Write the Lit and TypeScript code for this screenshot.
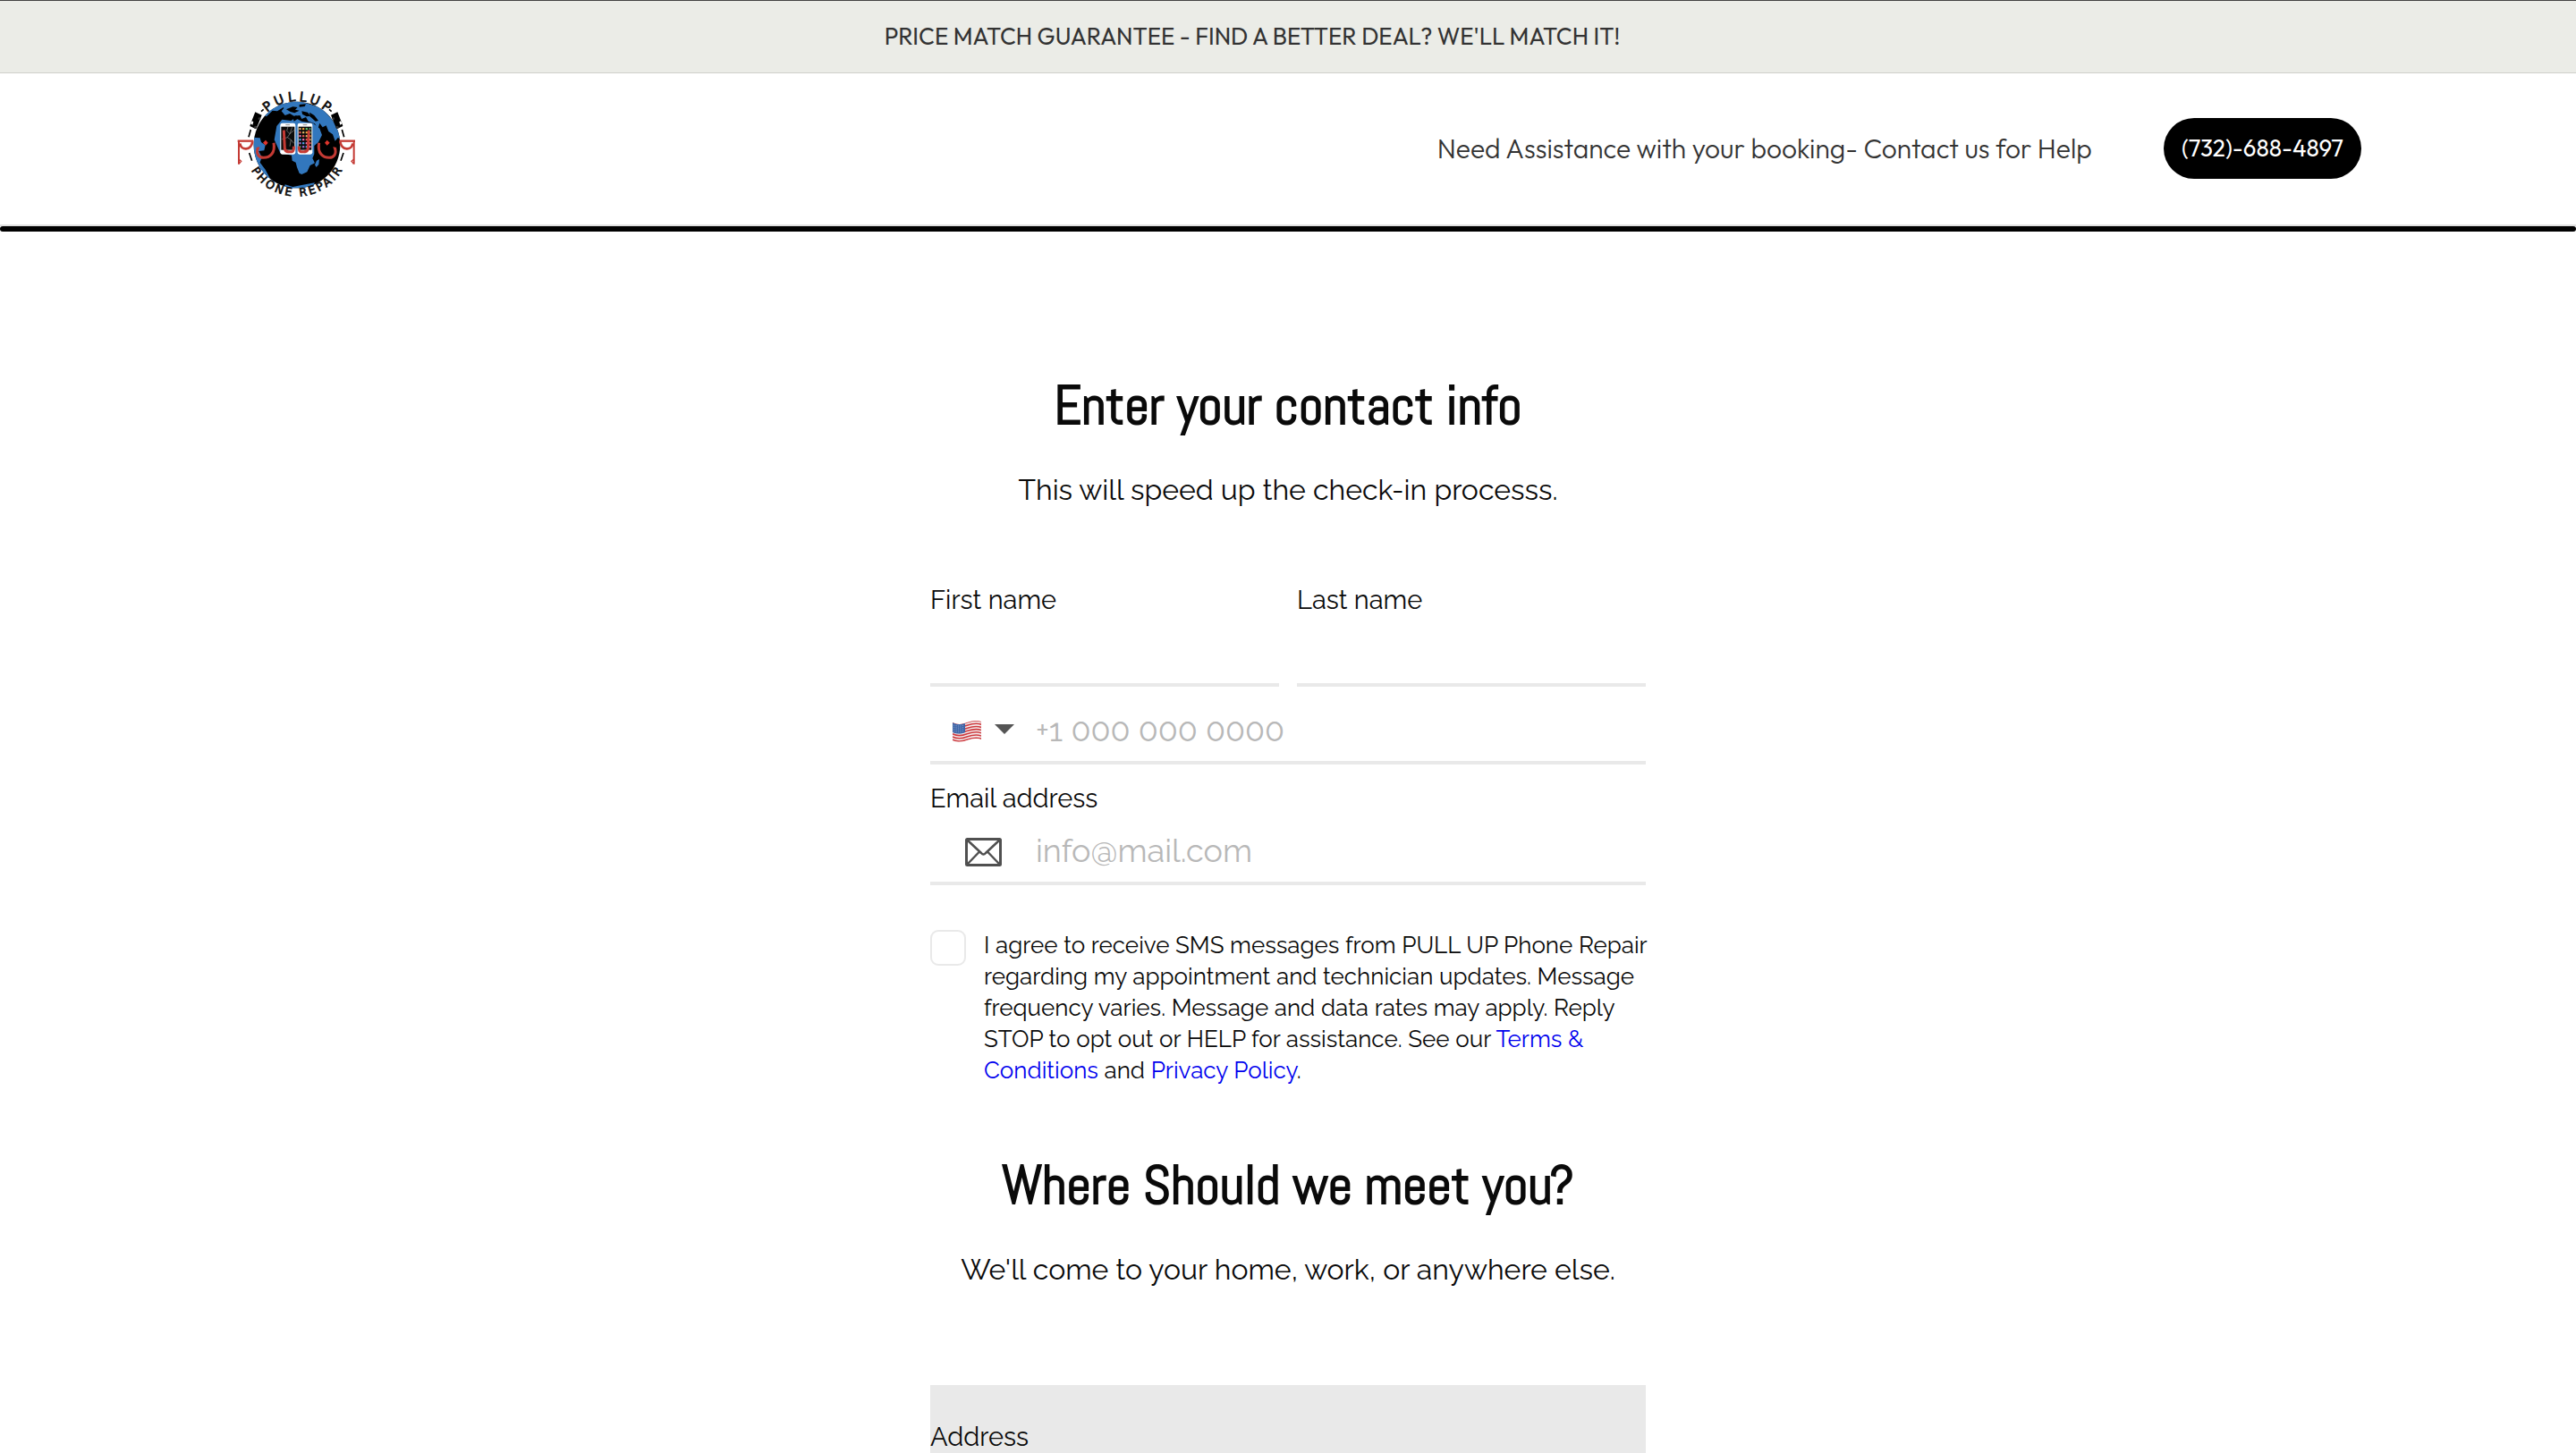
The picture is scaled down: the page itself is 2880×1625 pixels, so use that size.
import { LitElement, html, css, svg } from "lit";
import { customElement } from "lit/decorators.js";

const van = svg`
  <path d="M96 146 L106 121 L128 131 L118 157 L114 166 L108 178 L88 168 L91 158 Z" fill="#000"/>
  <path d="M90 160 l5 -9 l5 3 l-3 10 z" fill="#fff"/>
  <circle cx="107" cy="172" r="5" fill="#333"/><circle cx="120" cy="143" r="4" fill="#333"/>
  <path d="M126 119 l8 -7 M91 180 L84 205 M86 258 L95 284" stroke="#000" stroke-width="5" fill="none"/>`;

const script = svg`
  <g fill="none" stroke="#c43a34">
    <path d="M47 218 H100" stroke-width="7"/>
    <path d="M51 218 V296" stroke-width="6"/>
    <path d="M52 280 l7 6 l-7 8" stroke-width="4"/>
    <path d="M55 226 C58 250 92 252 97 220" stroke-width="8"/>
    <path d="M115 240 C108 262 118 274 134 274 C156 274 174 258 168 224" stroke-width="9"/>
    <path d="M119 238 l-5 9" stroke-width="5"/>
    <path d="M202 182 L205 244 Q207 254 218 254 H230 Q236 252 235 236" stroke-width="9"/>
  </g>
  <path d="M141 215 l8 9 l-8 9 l-9 -9 z" fill="#e0352c"/>`;

const appColors = ["#d8b36a", "#4aa3df", "#57c46a", "#e2574c", "#9b6bd3", "#f0a23a", "#e86fb0", "#3f8f57"];

@customElement("brand-logo")
class BrandLogo extends LitElement {
  static styles = css`
    :host { display: block; }
    .logo { display: block; }
    .ring {
      font-family: "DejaVu Sans", sans-serif;
      font-weight: 400;
      fill: #0a0a0a;
      stroke: #0a0a0a;
      stroke-width: 2px;
    }
    .top { font-size: 44px; }
    .bottom { font-size: 38px; }
  `;
  render() {
    return html`
      <svg class="logo" width="160" height="163" viewBox="0 -3 480 489" role="img" aria-label="Pull Up Phone Repair">
        <defs>
          <clipPath id="globe"><circle cx="246" cy="231" r="145"/></clipPath>
          <path id="arc-top" d="M97 233 A149 149 0 0 1 395 233"/>
          <path id="arc-bottom" d="M68 227 A177 177 0 0 0 422 227"/>
        </defs>
        <circle cx="246" cy="231" r="145" fill="#000"/>
        <g clip-path="url(#globe)" fill="#3277bd">
          <path d="M196 92 L250 82 L330 108 L385 170 L398 220 L384 206 L374 218 L366 196 L352 186 L344 166 L332 172 L322 158 L316 178 L306 160 L284 152 L276 138 L262 144 L256 132 L236 134 L222 126 L206 132 L194 118 L202 108 Z"/>
          <path d="M130 130 L160 104 L198 90 L202 104 L180 118 L164 116 L144 136 Z"/>
          <path d="M178 168 L196 146 L226 150 L240 140 L262 152 L300 158 L322 176 L330 198 L318 222 L304 234 L304 262 L298 276 L306 292 L290 300 L280 322 L262 330 L254 326 L246 306 L242 290 L230 284 L228 266 L190 258 L170 214 Z"/>
          <path d="M312 284 l9 -5 l-2 18 l-8 9 l-5 -8 z"/>
          <path d="M98 206 L122 208 L126 222 L140 232 L136 250 L118 252 L128 272 L122 290 L140 314 L158 348 L120 320 L98 270 Z"/>
          <path d="M206 364 L232 372 L262 366 L306 358 L298 372 L246 382 L204 374 Z"/>
        </g>
        <g fill="#000">
          <path d="M210 112 l22 -9 l16 2 l-8 8 l14 3 l-16 8 l-14 -4 z"/>
          <path d="M254 96 l22 -2 l-4 8 l-18 2 z"/>
          <path d="M262 118 l20 4 l10 12 l-14 2 l-14 -8 z"/>
          <path d="M288 122 l16 10 l14 18 l-10 2 l-18 -16 z"/>
          <path d="M232 138 l12 -6 l4 12 l-12 8 z"/>
        </g>
        ${van}
        <g transform="matrix(-1 0 0 1 488 0)">${van}</g>
        <rect x="190" y="158" width="51" height="105" rx="7" fill="#fff"/>
        <rect x="193" y="170" width="45" height="78" fill="#0b0b0b"/>
        <path d="M216 170 l-4 14 l10 10 l-8 12 l12 8 l-4 22 M222 194 l14 -12 M214 206 l-18 6 M226 214 l10 12 M230 172 l-8 22" stroke="#b9b9b9" stroke-width="1.5" fill="none"/>
        <rect x="248" y="158" width="50" height="105" rx="7" fill="#fff"/>
        <rect x="251" y="170" width="44" height="78" fill="#0b0b0b"/>
        ${[0, 1, 2, 3, 4, 5].flatMap((r) => [0, 1, 2, 3].map((c) => svg`
          <rect x=${253 + c * 11} y=${174 + r * 12} width="7" height="7" rx="2" fill=${appColors[(r * 3 + c * 5) % 8]}/>`))}
        <path d="M208 164 h14 M266 164 h14" stroke="#555" stroke-width="2"/>
        <circle cx="215" cy="256" r="4" fill="none" stroke="#bbb"/><circle cx="273" cy="256" r="4" fill="none" stroke="#bbb"/>
        ${script}
        <g transform="matrix(-1 0 0 1 488 0)">${script}</g>
        <text class="ring top" text-anchor="middle" dx="0 11 11 11 11 11"><textPath href="#arc-top" startOffset="50%">PULLUP</textPath></text>
        <text class="ring bottom" text-anchor="middle" dx="0 8 8 8 8 8 8 8 8 8 8 8"><textPath href="#arc-bottom" startOffset="50%">PHONE REPAIR</textPath></text>
      </svg>`;
  }
}

@customElement("app-root")
class AppRoot extends LitElement {
  static styles = css`
    :host {
      display: flex;
      flex-direction: column;
      min-height: 100vh;
      background: #fff;
      color: #0a0a0a;
      font-family: Raleway, sans-serif;
    }
    * { box-sizing: border-box; }
    .banner {
      border-top: 1px solid #444;
      border-bottom: 1px solid #cfd0cb;
      background: #ebece7;
      padding: 20px 80px 20px 0;
      font: 400 26px/40px Outfit, sans-serif;
      color: #333;
      text-align: center;
    }
    .header {
      display: flex;
      align-items: center;
      padding: 2px 240px 4px 250px;
      border-bottom: 2px solid #e0e0e0;
      font-family: Outfit, sans-serif;
    }
    .help {
      margin-left: auto;
      margin-right: 80px;
      font-weight: 300;
      font-size: 30px;
      line-height: 38px;
      color: #333;
      text-decoration: none;
    }
    .call {
      padding: 0 20px;
      border-radius: 34px;
      background: #000;
      color: #fff;
      font-size: 26px;
      line-height: 68px;
      text-decoration: none;
    }
    .rule { width: 100%; height: 6px; margin: 0; border: 0; border-radius: 3px; background: #000; }
    .main {
      flex: 1;
      display: flex;
      flex-direction: column;
      width: 100%;
      max-width: 800px;
      margin: 0 auto;
      padding-top: 159px;
    }
    .title {
      margin: 0;
      font: 700 60px/72px Abel, sans-serif;
      text-align: center;
    }
    .sub {
      margin: 34px 0 0;
      font-size: 32px;
      line-height: 48px;
      text-align: center;
    }
    .form { display: flex; flex-direction: column; padding: 81px 0 75px; }
    .names { display: grid; grid-template-columns: repeat(2, minmax(0, 1fr)); gap: 20px; }
    .field { display: flex; flex-direction: column; gap: 4px; }
    .label { font-size: 29px; line-height: 36px; }
    .line {
      display: flex;
      align-items: center;
      height: 75px;
      border-bottom: 4px solid #e9e9e9;
    }
    .input {
      flex: 1;
      min-width: 0;
      height: 100%;
      padding: 0;
      border: 0;
      outline: 0;
      background: none;
      font: 400 36px Raleway, sans-serif;
      color: #0a0a0a;
    }
    .input::placeholder { color: #b8b8b8; opacity: 1; }
    .phone { margin: 12px 0 20px; }
    .lead { position: relative; display: flex; align-items: center; flex: 0 0 118px; height: 100%; padding-top: 4px; }
    .country { gap: 14px; padding-left: 24px; }
    .country select { position: absolute; inset: 0; width: 100%; opacity: 0; }
    .caret { margin-bottom: 6px; }
    .mail { padding-left: 39px; }
    .consent { display: flex; align-items: flex-start; gap: 20px; margin: 50px -8px 0 0; }
    .box {
      appearance: none;
      flex: 0 0 40px;
      height: 40px;
      margin: 0;
      border: 2px solid #e9e9e9;
      border-radius: 9px;
      background: #fff;
    }
    .terms { font-size: 26px; line-height: 35px; }
    .link { color: #00e; text-decoration: none; }
    .address {
      flex: 1;
      margin-top: 105px;
      padding-top: 40px;
      background: #e9e9e9;
    }
    .address .label { margin: 0; font-weight: 400; }
  `;

  render() {
    return html`
      <div class="banner">PRICE MATCH GUARANTEE - FIND A BETTER DEAL? WE'LL MATCH IT!</div>
      <header class="header">
        <brand-logo></brand-logo>
        <a class="help" href="#contact">Need Assistance with your booking- Contact us for Help</a>
        <a class="call" href="tel:7326884897">(732)-688-4897</a>
      </header>
      <hr class="rule">
      <main class="main">
        <h1 class="title">Enter your contact info</h1>
        <p class="sub">This will speed up the check-in processs.</p>
        <form class="form" id="contact">
          <div class="names">
            <div class="field">
              <label class="label" for="first">First name</label>
              <div class="line"><input class="input" id="first" type="text"></div>
            </div>
            <div class="field">
              <label class="label" for="last">Last name</label>
              <div class="line"><input class="input" id="last" type="text"></div>
            </div>
          </div>
          <div class="line phone">
            <span class="lead country">
              ${this.flag()}
              <svg class="caret" width="22" height="12" viewBox="0 0 22 12" aria-hidden="true"><path d="M0 1 H22 L11 12 Z" fill="#555"/></svg>
              <select aria-label="Country code"><option>+1</option></select>
            </span>
            <input class="input" type="tel" aria-label="Phone number" placeholder="+1 000 000 0000">
          </div>
          <div class="field">
            <label class="label" for="email">Email address</label>
            <div class="line">
              <span class="lead mail">
                <svg width="41" height="32" viewBox="0 0 41 32" fill="none" stroke="#505050" stroke-linejoin="round" aria-hidden="true">
                  <rect x="1.5" y="1.5" width="38" height="29" rx="1" stroke-width="3"/>
                  <path d="M3 3 L18 17 Q20.500 20 23 17 L38 3 M3 29 L16 15.500 M38 29 L25 15.500" stroke-width="2.500"/>
                </svg>
              </span>
              <input class="input" id="email" type="email" placeholder="info@mail.com">
            </div>
          </div>
          <div class="consent">
            <input class="box" id="sms" type="checkbox">
            <label class="terms" for="sms">I agree to receive SMS messages from PULL UP Phone Repair regarding my appointment and technician updates. Message frequency varies. Message and data rates may apply. Reply STOP to opt out or HELP for assistance. See our <a class="link" href="#terms">Terms &amp; Conditions</a> and <a class="link" href="#privacy">Privacy Policy</a>.</label>
          </div>
        </form>
        <h2 class="title">Where Should we meet you?</h2>
        <p class="sub">We'll come to your home, work, or anywhere else.</p>
        <section class="address"><h3 class="label">Address</h3></section>
      </main>`;
  }

  private flag() {
    return svg`
      <svg width="34" height="26" viewBox="0 0 34 26" aria-hidden="true">
        <defs><clipPath id="wave"><path d="M1 3 C7 6 12 5 17 3 C23 1 28 0 33 2 V22 C28 20 23 21 17 23 C12 25 6 25 1 24 Z"/></clipPath></defs>
        <g clip-path="url(#wave)">
          <rect width="34" height="26" fill="#f3eeee"/>
          <g fill="none" stroke="#cf3a3f" stroke-width="1.600">
            ${[3, 6.2, 9.4, 12.6, 15.8, 19, 22.2].map((y) => svg`<path d="M1 ${y} c6 3 11 2 16 0 c6 -2 11 -3 16 -1"/>`)}
          </g>
          <path d="M1 3 C6 6 11 5 15 4 V14 C10 16 6 16 1 14 Z" fill="#3f66a8"/>
          <g fill="none" stroke="#a9bbdc" stroke-width=".8" stroke-dasharray="1 1.500">
            ${[6, 8.2, 10.4, 12.6].map((y) => svg`<path d="M2 ${y} q7 2 12 0"/>`)}
          </g>
        </g>
      </svg>`;
  }
}
